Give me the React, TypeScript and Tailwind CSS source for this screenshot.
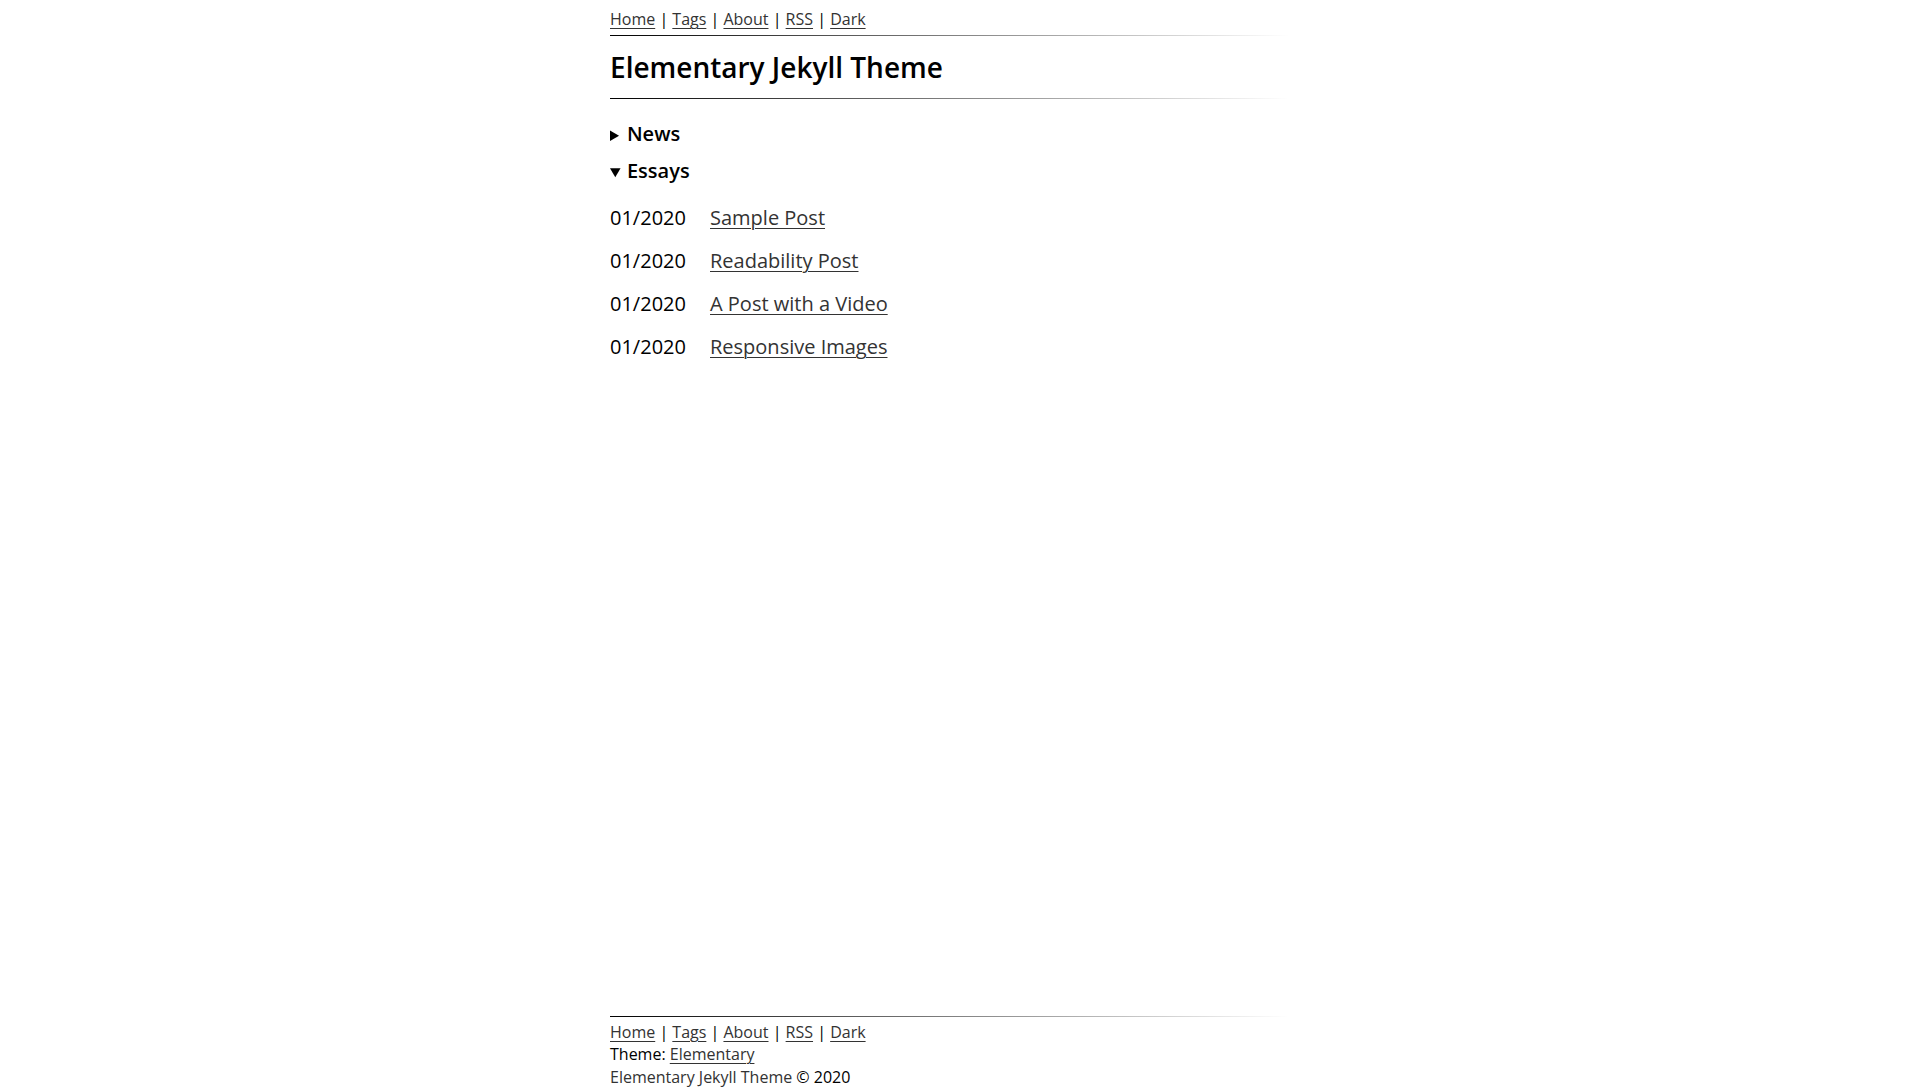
import React from "react";

const navLinks = ["Home", "Tags", "About", "RSS", "Dark"];

const posts = [
  { date: "01/2020", title: "Sample Post" },
  { date: "01/2020", title: "Readability Post" },
  { date: "01/2020", title: "A Post with a Video" },
  { date: "01/2020", title: "Responsive Images" },
];

function Nav() {
  return (
    <nav className="text-[16px] leading-[22.4px]">
      {navLinks.map((l, i) => (
        <span key={l}>
          {i > 0 && <span className="text-black"> | </span>}
          <a href="#" className="text-[#333] underline underline-offset-[3px] decoration-1">
            {l}
          </a>
        </span>
      ))}
    </nav>
  );
}

function Rule() {
  return <div className="h-px w-full bg-linear-to-r from-black to-transparent to-[97%]" />;
}

export default function App() {
  return (
    <div className="min-h-screen bg-white text-black font-['Open_Sans',sans-serif]">
      <div className="mx-auto flex min-h-screen w-[700px] flex-col">
        <header className="pt-[8px]">
          <Nav />
          <div className="mt-[5px]">
            <Rule />
          </div>
          <h1 className="mt-[14px] mb-[14px] text-[28px] font-semibold leading-[34px]">
            Elementary Jekyll Theme
          </h1>
          <Rule />
        </header>

        <main className="pt-[21px] text-[20px] leading-[27px]">
          <details className="mb-[8px]">
            <summary className="cursor-pointer text-[16px] leading-[27px]">
              <span className="text-[20px] font-semibold leading-[27px]">News</span>
            </summary>
          </details>
          <details open>
            <summary className="cursor-pointer text-[16px] leading-[27px]">
              <span className="text-[20px] font-semibold leading-[27px]">Essays</span>
            </summary>
            <div className="mt-[10px]">
              {posts.map((p) => (
                <div key={p.title} className="grid grid-cols-[100px_1fr] py-[8px]">
                  <span>{p.date}</span>
                  <a href="#" className="text-[#333] underline underline-offset-[3px] decoration-1">
                    {p.title}
                  </a>
                </div>
              ))}
            </div>
          </details>
        </main>

        <footer className="mt-auto text-[16px] leading-[22.4px]">
          <Rule />
          <div className="pt-[4px]">
            <Nav />
            <div>
              Theme:{" "}
              <a href="#" className="text-[#333] underline underline-offset-[3px] decoration-1">
                Elementary
              </a>
            </div>
            <div>
              <span className="text-[#333]">Elementary Jekyll Theme</span> © 2020
            </div>
          </div>
        </footer>
      </div>
    </div>
  );
}
